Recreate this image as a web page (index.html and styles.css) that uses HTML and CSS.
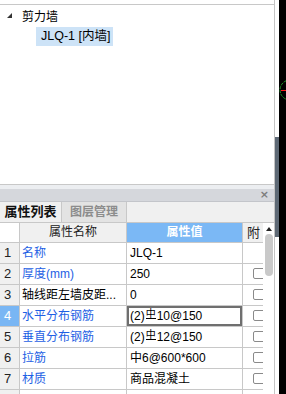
FILE: index.html
```html
<!DOCTYPE html>
<html lang="zh-CN">

<head>
    <meta charset="UTF-8">
    <title>属性列表</title>
    <link rel="stylesheet" href="styles.css">
</head>

<body>
    <div class="screen">
        <div class="main">
            <div class="tree">
                <div class="tree-node"><span class="caret"></span>剪力墙</div>
                <div class="tree-leaf"><span class="leaf-label">JLQ-1 [内墙]</span></div>
            </div>

            <div class="dock-title"><span class="dock-close">×</span></div>

            <div class="tabs">
                <div class="tab active">属性列表</div>
                <div class="tab">图层管理</div>
            </div>

            <div class="grid-wrap">
                <div class="props">
                    <div class="cell head-num"></div>
                    <div class="cell head">属性名称</div>
                    <div class="cell head head-val">属性值</div>
                    <div class="cell head head-extra">附</div>

                    <div class="cell num">1</div>
                    <div class="cell name">名称</div>
                    <div class="cell val">JLQ-1</div>
                    <div class="cell extra"></div>

                    <div class="cell num">2</div>
                    <div class="cell name">厚度(mm)</div>
                    <div class="cell val">250</div>
                    <div class="cell extra"><span class="check"></span></div>

                    <div class="cell num">3</div>
                    <div class="cell name plain">轴线距左墙皮距...</div>
                    <div class="cell val">0</div>
                    <div class="cell extra"><span class="check"></span></div>

                    <div class="cell num selected">4</div>
                    <div class="cell name">水平分布钢筋</div>
                    <div class="cell val editing">(2)<span class="rebar">中</span>10@150</div>
                    <div class="cell extra"><span class="check"></span></div>

                    <div class="cell num">5</div>
                    <div class="cell name">垂直分布钢筋</div>
                    <div class="cell val">(2)<span class="rebar">中</span>12@150</div>
                    <div class="cell extra"><span class="check"></span></div>

                    <div class="cell num">6</div>
                    <div class="cell name">拉筋</div>
                    <div class="cell val">中6@600*600</div>
                    <div class="cell extra"><span class="check"></span></div>

                    <div class="cell num">7</div>
                    <div class="cell name">材质</div>
                    <div class="cell val">商品混凝土</div>
                    <div class="cell extra"><span class="check"></span></div>

                    <div class="cell num"></div>
                    <div class="cell name"></div>
                    <div class="cell val"></div>
                    <div class="cell extra"><span class="check"></span></div>
                </div>

                <div class="vscroll">
                    <span class="vscroll-up"></span>
                    <span class="vscroll-thumb"></span>
                </div>
            </div>
        </div>

        <div class="splitter">
            <div class="splitter-thumb"></div>
        </div>

        <div class="canvas">
            <svg width="7" height="394" viewBox="0 0 7 394">
                <circle cx="11" cy="90" r="10" fill="none" stroke="#1f9a2a" stroke-width="1" stroke-dasharray="3 1"/>
                <line x1="2" y1="90.5" x2="7" y2="90.5" stroke="#ff1a1a" stroke-width="1"/>
            </svg>
        </div>
    </div>
</body>

</html>
```

FILE: styles.css
```css
body {
    margin: 0;
    font-family: "Liberation Sans", "Noto Sans CJK SC", sans-serif;
    font-size: 12px;
    color: #000;
    background-color: #000;
}

.screen {
    display: flex;
    width: 286px;
    height: 394px;
    overflow: hidden;
}

/* left dock panel */
.main {
    width: 274px;
    border-right: 1px solid #c4c4c4;
    display: flex;
    flex-direction: column;
    background-color: #fff;
    flex-shrink: 0;
}

.tree {
    margin-top: 4px;
    height: 179px;
    border-top: 1px solid #c8c8c8;
    border-bottom: 1px solid #c8c8c8;
}

.tree-node {
    display: flex;
    align-items: center;
    padding: 2px 0 0 7px;
    height: 16px;
    font-size: 12px;
}

.caret {
    width: 0;
    height: 0;
    border-left: 5px solid transparent;
    border-bottom: 5px solid #333;
    margin-right: 10px;
}

.tree-leaf {
    margin-top: 4px;
    padding-left: 36px;
}

.leaf-label {
    display: inline-block;
    line-height: 19px;
    padding: 0 3px 0 5px;
    background-color: #cde3f7;
    font-size: 12.5px;
}

.dock-title {
    height: 12px;
    border-top: 4px solid #eceef1;
    background-color: #d5d7dc;
    display: flex;
    justify-content: flex-end;
    align-items: center;
    padding-right: 5px;
}

.dock-close {
    font-family: "DejaVu Sans", sans-serif;
    font-size: 11px;
    font-weight: bold;
    line-height: 10px;
    color: #7c7c7c;
}

.tabs {
    display: flex;
    height: 20px;
    border-top: 1px solid #c3c5ca;
    border-bottom: 1px solid #c8c8c8;
    background-color: #f0f0f0;
}

.tab {
    width: 64px;
    line-height: 20px;
    text-align: center;
    font-weight: bold;
    color: #8c8c8c;
    background-color: #e3e3e3;
    border-right: 1px solid #c8c8c8;
}

.tab.active {
    width: 61px;
    font-size: 13px;
    color: #111;
    background-color: #f0f0f0;
}

/* property grid */
.grid-wrap {
    display: flex;
    flex: 1;
    overflow: hidden;
}

.props {
    display: grid;
    grid-template-columns: 19px 106px 115px 20px;
    grid-template-rows: 19px;
    grid-auto-rows: 20px;
    gap: 1px;
    width: 263px;
    align-content: start;
    background-color: #c8c8c8;
}

.cell {
    background-color: #fff;
    line-height: 20px;
    white-space: nowrap;
    overflow: hidden;
}

.head {
    line-height: 19px;
    text-align: center;
    background-color: #f0f0f0;
    color: #222;
}

.head-val {
    background-color: #7bb8f5;
    color: #fff;
    font-weight: bold;
}

.head-extra {
    text-align: left;
    padding-left: 4px;
    font-size: 13px;
}

.num {
    background-color: #f0f0f0;
    padding-left: 4px;
    font-size: 13px;
    color: #222;
}

.num.selected {
    background-color: #79b6f4;
    color: #fff;
}

.name {
    padding-left: 2px;
    color: #1e5fe4;
}

.name.plain {
    color: #000;
}

.val {
    padding-left: 3px;
}

.val.editing {
    box-shadow: inset 0 0 0 2px #6f6f6f;
}

.rebar {
    display: inline-block;
    font-size: 10px;
    line-height: 9px;
    border-bottom: 1px solid #000;
    vertical-align: 3px;
    margin: 0 1px;
}

.check {
    display: inline-block;
    width: 12px;
    height: 9px;
    margin: 4px 0 0 10px;
    border: 1px solid #8a8a8a;
    border-radius: 2px;
    vertical-align: top;
}

.vscroll {
    width: 11px;
    display: flex;
    flex-direction: column;
    align-items: center;
    background-color: #fff;
}

.vscroll-up {
    margin-top: 4px;
    width: 0;
    height: 0;
    border-left: 3px solid transparent;
    border-right: 3px solid transparent;
    border-bottom: 4px solid #222;
}

.vscroll-thumb {
    margin-top: 3px;
    width: 8px;
    height: 42px;
    border-radius: 4px;
    background-color: #c9c9c9;
}

/* splitter and drawing canvas */
.splitter {
    width: 4px;
    background-color: #fff;
    flex-shrink: 0;
}

.splitter-thumb {
    margin-top: 137px;
    height: 100px;
    background-color: #5e6975;
}

.canvas {
    width: 7px;
    background-color: #000;
    flex-shrink: 0;
}

.canvas svg {
    display: block;
}
```
